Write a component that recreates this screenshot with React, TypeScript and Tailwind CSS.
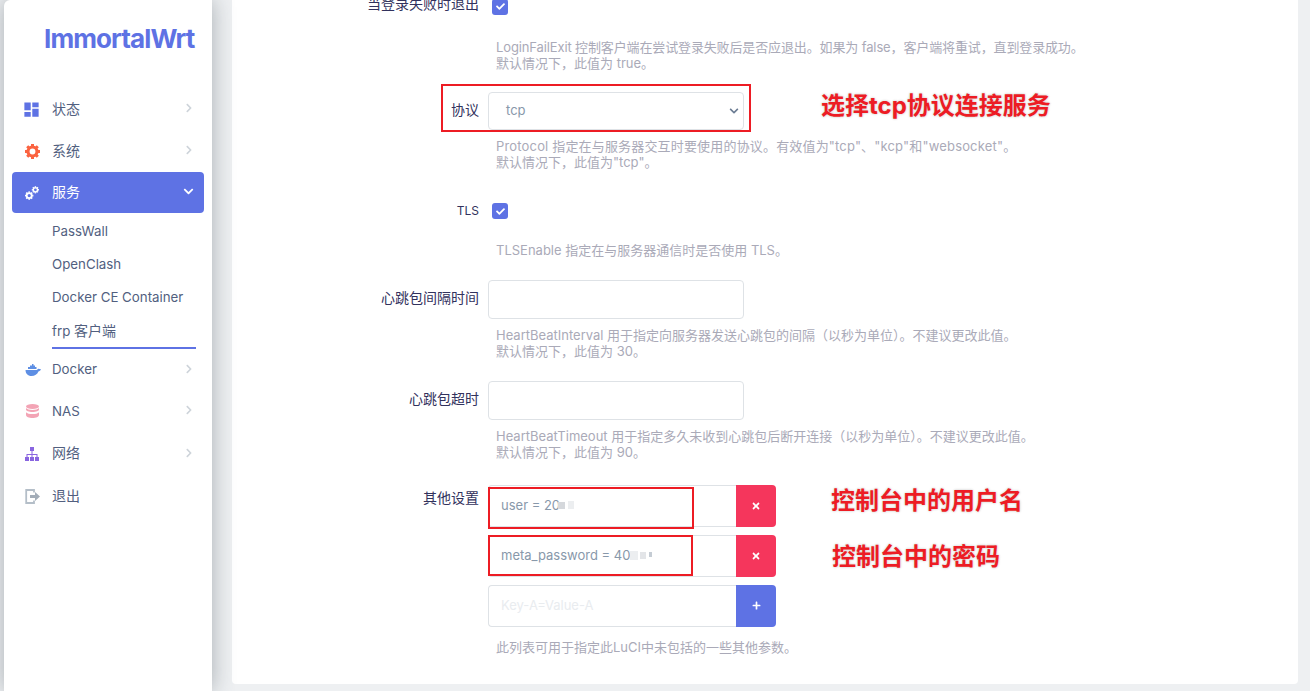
import { ReactNode } from 'react';
import { FaChevronRight, FaChevronDown, FaCheck, FaTimes, FaPlus } from 'react-icons/fa';
import { MdDashboard } from 'react-icons/md';

const FONT = "font-['Inter','Noto_Sans_CJK_SC',sans-serif]";
const TEETH = [0, 45, 90, 135, 180, 225, 270, 315];

function Gear({ color, x, y, r }: { color: string; x: number; y: number; r: number }) {
    return (
        <g>
            <circle cx={x} cy={y} r={r * 0.6} fill="none" stroke={color} strokeWidth={r * 0.42} />
            {TEETH.map((deg) => (
                <rect
                    key={deg}
                    x={x - r * 0.2}
                    y={y - r}
                    width={r * 0.4}
                    height={r * 0.3}
                    fill={color}
                    transform={`rotate(${deg} ${x} ${y})`}
                />
            ))}
        </g>
    );
}

function SystemIcon() {
    return (
        <svg viewBox="0 0 14 14" className="w-[15px] h-[15px]">
            <Gear color="#fb6340" x={7} y={7} r={7} />
        </svg>
    );
}

function ServiceIcon() {
    return (
        <svg viewBox="0 0 14 14" className="w-[14px] h-[14px]">
            <Gear color="#fff" x={4.2} y={9.6} r={4.2} />
            <Gear color="#fff" x={10.4} y={3.8} r={3.6} />
        </svg>
    );
}

function DockerIcon() {
    return (
        <svg viewBox="0 0 16 12" className="w-[16px] h-[12px]" fill="#5e8fe4">
            <path d="M0.5 6h10.5c1 0 1.7-.7 2.2-1.300L16 5.200c-.6 1.400-1.600 2-2.600 2.200C12.300 10.200 9.800 12 6.500 12 2.800 12 .6 9.500.5 6z" />
            <path d="M3 5V3h2V1.500h2V0h1.500v1.500H10V3h1.500v2z" />
        </svg>
    );
}

function DatabaseIcon() {
    return (
        <svg viewBox="0 0 13 14" className="w-[13px] h-[14px] ml-[1px]" fill="#f3a4b5">
            <ellipse cx="6.500" cy="2.500" rx="6.500" ry="2.500" />
            <path d="M0 4v1.500C0 6.900 2.900 8 6.500 8S13 6.900 13 5.500V4c-1 1.300-3.600 2-6.500 2S1 5.300 0 4z" />
            <path d="M0 8.200v2.800C0 12.700 2.900 14 6.500 14S13 12.700 13 11V8.200c-1 1.300-3.600 1.900-6.500 1.900S1 9.500 0 8.200z" />
        </svg>
    );
}

function SitemapIcon() {
    return (
        <svg viewBox="0 0 14 14" className="w-[14px] h-[14px]" fill="#8965e0">
            <rect x="5" y="0" width="4" height="4" />
            <rect x="0" y="10" width="4" height="4" />
            <rect x="5" y="10" width="4" height="4" />
            <rect x="10" y="10" width="4" height="4" />
            <path d="M6.500 4h1v3H12.500v3h-1V8h-4v2h-1V8h-4v2h-1V7h5z" />
        </svg>
    );
}

function ExitIcon() {
    return (
        <svg viewBox="0 0 15 15" className="w-[15px] h-[15px]">
            <path d="M9 3.500V1H1.200v13H9v-2.500" fill="none" stroke="#b4bec8" strokeWidth="1.800" />
            <path d="M5 6h5V3l5 4.500-5 4.500V9H5z" fill="#a3adb8" />
        </svg>
    );
}

function NavItem({ icon, label, open, arrow = true, latin, className = 'h-[42px]' }: { icon: ReactNode; label: string; open?: boolean; arrow?: boolean; latin?: boolean; className?: string }) {
    return (
        <div className={`flex items-center rounded pl-[13px] pr-[10px] ${className} ${open ? 'bg-[#5e72e4] text-white' : 'text-[#525f7f]'}`}>
            <span className="w-[27px] flex items-center">{icon}</span>
            <span className={`flex-1 ${latin ? 'text-[13.3px] pt-[1px]' : 'text-[14px] pb-[2px]'}`}>{label}</span>
            {arrow && (open
                ? <FaChevronDown className="text-[11px] text-white mb-[2px]" />
                : <FaChevronRight className="text-[10px] text-[#ced4da] mb-[2px]" />)}
        </div>
    );
}

function SubItem({ children, active }: { children: ReactNode; active?: boolean }) {
    return (
        <div className={`ml-10 mr-2 flex items-center text-[13.3px] text-[#525f7f] ${active ? 'h-[35px] border-b-2 border-[#5e72e4]' : 'h-[33px]'}`}>
            <span>{children}</span>
        </div>
    );
}

function Sidebar() {
    return (
        <aside className="w-[208px] ml-1 shrink-0 h-full bg-white rounded-tl-md shadow-[0_0_22px_rgba(80,90,100,0.45)] z-10">
            <div className="h-[88px] pl-[40px] pt-[22px] text-[26px] leading-[34px] font-bold tracking-[-0.9px] text-[#5e72e4]">ImmortalWrt</div>
            <nav className="mx-2">
                <NavItem icon={<MdDashboard className="text-[19px] -ml-[3px] text-[#5e72e4]" />} label="状态" />
                <NavItem icon={<SystemIcon />} label="系统" />
                <NavItem icon={<ServiceIcon />} label="服务" open className="h-[41px]" />
                <div className="pt-[2px]">
                    <SubItem>PassWall</SubItem>
                    <SubItem>OpenClash</SubItem>
                    <SubItem>Docker CE Container</SubItem>
                    <SubItem active>frp <span className="text-[14px]">客户端</span></SubItem>
                </div>
                <NavItem icon={<DockerIcon />} label="Docker" latin className="h-[41px]" />
                <NavItem icon={<DatabaseIcon />} label="NAS" latin />
                <NavItem icon={<SitemapIcon />} label="网络" className="h-[43px]" />
                <NavItem icon={<ExitIcon />} label="退出" arrow={false} />
            </nav>
        </aside>
    );
}

function Check() {
    return (
        <span className="w-4 h-4 ml-1 rounded-[3px] bg-[#5e72e4] flex items-center justify-center">
            <FaCheck className="text-[9px] text-white" />
        </span>
    );
}

function Row({ label, labelClass = 'pt-[8px]', field, children, descClass = 'mt-[8px]', className = '' }: { label: string; labelClass?: string; field: ReactNode; children: ReactNode; descClass?: string; className?: string }) {
    return (
        <div className={`flex ${className}`}>
            <div className={`w-[247px] shrink-0 text-right text-[14px] leading-[20px] text-[#32325d] ${labelClass}`}>{label}</div>
            <div className="ml-[9px] flex-1">
                {field}
                <div className={`pl-2 text-[13px] leading-[16.5px] text-[#aaaab8] ${descClass}`}>
                    {children}
                </div>
            </div>
        </div>
    );
}

function TextInput() {
    return <div className="w-[256px] h-[39px] bg-white border border-[#dee2e6] rounded" />;
}

function Smudge({ className }: { className: string }) {
    return <span className={`inline-block ${className}`} />;
}

function DynRow({ children, add }: { children: ReactNode; add?: boolean }) {
    return (
        <div className="flex w-[288px] h-[42px]">
            <div className={`flex-1 flex items-center pl-3 text-[13px] bg-white border border-r-0 border-[#dee2e6] rounded-l ${add ? 'text-[#e9ecef]' : 'text-[#8898aa]'}`}>
                {children}
            </div>
            <div className={`w-10 flex items-center justify-center rounded-r ${add ? 'bg-[#5e72e4]' : 'bg-[#f5365c]'}`}>
                {add ? <FaPlus className="text-[9px] text-white" /> : <FaTimes className="text-[10px] text-white" />}
            </div>
        </div>
    );
}

function Callout({ children, className }: { children: ReactNode; className: string }) {
    return (
        <div className={`absolute whitespace-nowrap text-[24px] leading-[30px] font-bold text-[#ed1c24] [text-shadow:0_0_2px_#d8d8d8,0_0_3px_#d8d8d8] ${className}`}>
            {children}
        </div>
    );
}

function Form() {
    return (
        <main className="relative flex-1 h-[684px] ml-5 mr-3 bg-white rounded-b flex flex-col justify-end pb-[29px]">
            <Row
                label="当登录失败时退出"
                labelClass="-mt-[5px]"
                descClass="mt-[24px]"
                field={<div className="h-4"><Check /></div>}
            >
                <div className="tracking-[-0.13px]">LoginFailExit 控制客户端在尝试登录失败后是否应退出。如果为 false，客户端将重试，直到登录成功。</div>
                <div>默认情况下，此值为 true。</div>
            </Row>
            <Row
                className="mt-[20px]"
                label="协议"
                field={
                    <div className="w-[256px] h-[38px] bg-white border border-[#dee2e6] rounded flex items-center pl-[17px] pr-[4px] justify-between text-[13px] text-[#8898aa]">
                        tcp
                        <FaChevronDown className="text-[10px] text-[#6b7c93]" />
                    </div>
                }
            >
                <div className="tracking-[0.17px]">Protocol 指定在与服务器交互时要使用的协议。有效值为"tcp"、"kcp"和"websocket"。</div>
                <div>默认情况下，此值为"tcp"。</div>
            </Row>
            <Row
                className="mt-[32.5px]"
                label="TLS"
                labelClass="-mt-[2px] !text-[12px]"
                descClass="mt-[22px]"
                field={<div className="h-[17px]"><Check /></div>}
            >
                TLSEnable 指定在与服务器通信时是否使用 TLS。
            </Row>
            <Row className="mt-[21px]" label="心跳包间隔时间" field={<TextInput />}>
                <div>HeartBeatInterval 用于指定向服务器发送心跳包的间隔（以秒为单位）。不建议更改此值。</div>
                <div>默认情况下，此值为 30。</div>
            </Row>
            <Row className="mt-[21px]" label="心跳包超时" field={<TextInput />}>
                <div>HeartBeatTimeout 用于指定多久未收到心跳包后断开连接（以秒为单位）。不建议更改此值。</div>
                <div>默认情况下，此值为 90。</div>
            </Row>
            <Row
                className="mt-[24px]"
                label="其他设置"
                labelClass="pt-[3px]"
                descClass="mt-[12px]"
                field={
                    <div className="flex flex-col gap-2">
                        <DynRow>user = 20<Smudge className="w-[7px] h-[7px] -ml-[2px] bg-[#d5d8dc]" /><Smudge className="w-[6px] h-[8px] ml-[3px] -mt-[2px] bg-[#eceef0]" /></DynRow>
                        <DynRow>meta_password = 40<Smudge className="w-[8px] h-[9px] bg-[#eceef0]" /><Smudge className="w-[6px] h-[7px] ml-[2px] bg-[#e3e5e8]" /><Smudge className="w-[3px] h-[5px] ml-[3px] -mt-[2px] bg-[#c5ccd4]" /></DynRow>
                        <DynRow add>Key-A=Value-A</DynRow>
                    </div>
                }
            >
                此列表可用于指定此LuCI中未包括的一些其他参数。
            </Row>

            <div className="absolute left-[209px] top-[84px] w-[310px] h-[48px] border-2 border-[#ed1c24]" />
            <div className="absolute left-[256px] top-[487px] w-[206px] h-[42px] border-2 border-[#ed1c24]" />
            <div className="absolute left-[256px] top-[535px] w-[205px] h-[41px] border-2 border-[#ed1c24]" />
            <Callout className="left-[589px] top-[91px]">选择tcp协议连接服务</Callout>
            <Callout className="left-[599px] top-[486px]">控制台中的用户名</Callout>
            <Callout className="left-[600px] top-[542px]">控制台中的密码</Callout>
        </main>
    );
}

export default function App() {
    return (
        <div className={`flex h-[691px] w-full overflow-hidden bg-[#eef0f2] ${FONT}`}>
            <Sidebar />
            <Form />
        </div>
    );
}
